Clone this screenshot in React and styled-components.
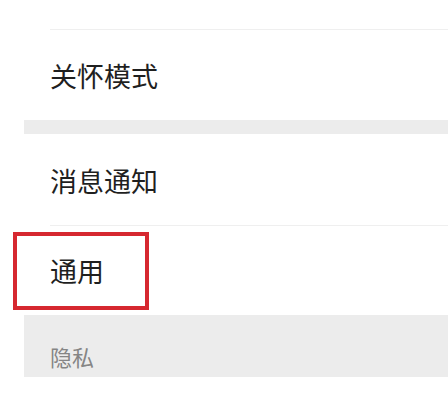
import React from "react";
import styled, { createGlobalStyle } from "styled-components";

const Global = createGlobalStyle`
  html, body { margin: 0; padding: 0; background: #ffffff; }
  body { font-family: "Noto Sans CJK SC", "Noto Sans", sans-serif; }
`;

const Page = styled.div`
  width: 448px;
  height: 400px;
  overflow: hidden;
  background: #ffffff;
`;

const List = styled.div`
  margin-left: 24px;
  display: flex;
  flex-direction: column;
`;

const Row = styled.div`
  position: relative;
  height: ${(p) => p.$h}px;
  background: #ffffff;
  display: flex;
  align-items: center;
  padding-left: 26px;
  font-size: 27px;
  color: #1f1f1f;
  box-sizing: border-box;
  &::after {
    content: "";
    display: ${(p) => (p.$divider ? "block" : "none")};
    position: absolute;
    left: 26px;
    right: 0;
    bottom: 0;
    height: 1px;
    background: #efefef;
  }
`;

const Gap = styled.div`
  height: ${(p) => p.$h}px;
  background: #ececec;
`;

const SectionHeader = styled.div`
  height: 62px;
  background: #ececec;
  display: flex;
  align-items: center;
  padding: 20px 0 0 26px;
  box-sizing: border-box;
  font-size: 22px;
  color: #858585;
`;

const Highlight = styled.div`
  position: absolute;
  left: -11px;
  top: 6px;
  width: 136px;
  height: 78px;
  border: 4px solid #d62830;
  box-sizing: border-box;
  pointer-events: none;
`;

export default function App() {
  return (
    <Page>
      <Global />
      <List>
        <Row $h={30} $divider />
        <Row $h={90}>关怀模式</Row>
        <Gap $h={14} />
        <Row $h={92} $divider>消息通知</Row>
        <Row $h={89}>
          通用
          <Highlight />
        </Row>
        <SectionHeader>隐私</SectionHeader>
      </List>
    </Page>
  );
}
